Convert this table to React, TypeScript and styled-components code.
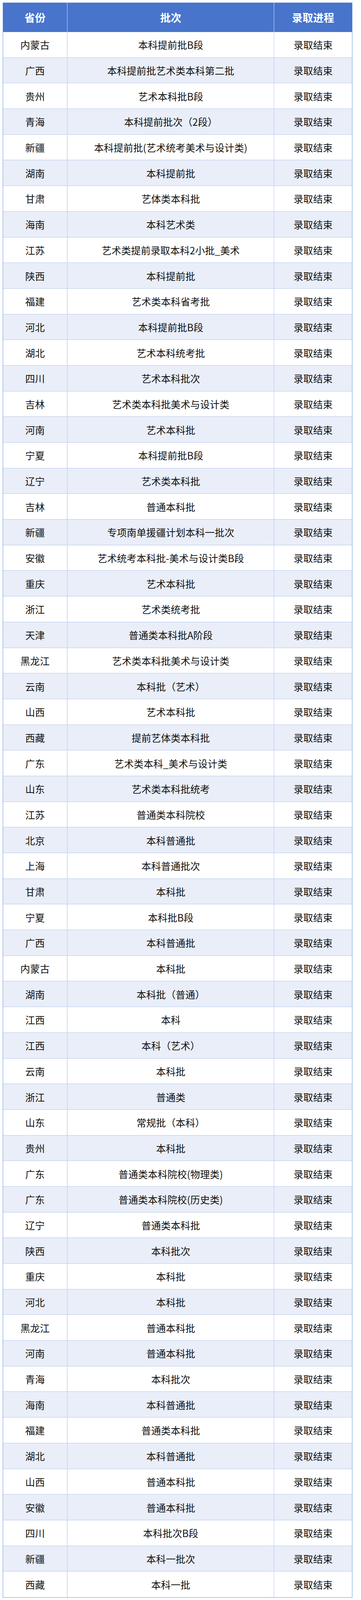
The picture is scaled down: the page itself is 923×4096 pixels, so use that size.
import React from "react";
import styled, { createGlobalStyle } from "styled-components";

const Global = createGlobalStyle`
  html, body { margin: 0; padding: 0; background: #ffffff; }
  body { font-family: "Microsoft YaHei", "Noto Sans CJK SC", "Noto Sans", sans-serif; }
`;

const Table = styled.div`
  margin: 6px 0 0 7px;
  width: 894px;
  box-sizing: border-box;
  border: 1.5px solid #6b93e0;
  border-top-color: #c9d7f2;
`;

const Row = styled.div<{ $alt?: boolean; $head?: boolean; $last?: boolean }>`
  display: grid;
  grid-template-columns: 165px 528px 1fr;
  height: ${(p) => (p.$head ? "75px" : "65.7px")};
  background: ${(p) => (p.$head ? "#4874cb" : p.$alt ? "#e9eef9" : "#ffffff")};
  border-bottom: ${(p) => (p.$last ? "none" : p.$head ? "none" : "1px solid #b4c8ec")};
  box-sizing: border-box;
`;

const Cell = styled.div<{ $head?: boolean; $first?: boolean }>`
  display: flex;
  align-items: center;
  justify-content: center;
  font-size: ${(p) => (p.$head ? "27px" : "25px")};
  font-weight: ${(p) => (p.$head ? 700 : 400)};
  color: ${(p) => (p.$head ? "#ffffff" : "#111111")};
  border-right: ${(p) =>
    p.$first ? "2px solid #cfdbf3" : "1px solid #b4c8ec"};
  white-space: nowrap;
  box-sizing: border-box;
  &:last-child { border-right: none; }
`;

const HeadCell = styled(Cell)`
  border-right-color: ${(p) => (p.$first ? "#8aa9e4" : "#d6e1f5")};
`;

const data: [string, string][] = [
  ["内蒙古", "本科提前批B段"],
  ["广西", "本科提前批艺术类本科第二批"],
  ["贵州", "艺术本科批B段"],
  ["青海", "本科提前批次（2段）"],
  ["新疆", "本科提前批(艺术统考美术与设计类)"],
  ["湖南", "本科提前批"],
  ["甘肃", "艺体类本科批"],
  ["海南", "本科艺术类"],
  ["江苏", "艺术类提前录取本科2小批_美术"],
  ["陕西", "本科提前批"],
  ["福建", "艺术类本科省考批"],
  ["河北", "本科提前批B段"],
  ["湖北", "艺术本科统考批"],
  ["四川", "艺术本科批次"],
  ["吉林", "艺术类本科批美术与设计类"],
  ["河南", "艺术本科批"],
  ["宁夏", "本科提前批B段"],
  ["辽宁", "艺术类本科批"],
  ["吉林", "普通本科批"],
  ["新疆", "专项南单援疆计划本科一批次"],
  ["安徽", "艺术统考本科批-美术与设计类B段"],
  ["重庆", "艺术本科批"],
  ["浙江", "艺术类统考批"],
  ["天津", "普通类本科批A阶段"],
  ["黑龙江", "艺术类本科批美术与设计类"],
  ["云南", "本科批（艺术）"],
  ["山西", "艺术本科批"],
  ["西藏", "提前艺体类本科批"],
  ["广东", "艺术类本科_美术与设计类"],
  ["山东", "艺术类本科批统考"],
  ["江苏", "普通类本科院校"],
  ["北京", "本科普通批"],
  ["上海", "本科普通批次"],
  ["甘肃", "本科批"],
  ["宁夏", "本科批B段"],
  ["广西", "本科普通批"],
  ["内蒙古", "本科批"],
  ["湖南", "本科批（普通）"],
  ["江西", "本科"],
  ["江西", "本科（艺术）"],
  ["云南", "本科批"],
  ["浙江", "普通类"],
  ["山东", "常规批（本科）"],
  ["贵州", "本科批"],
  ["广东", "普通类本科院校(物理类)"],
  ["广东", "普通类本科院校(历史类)"],
  ["辽宁", "普通类本科批"],
  ["陕西", "本科批次"],
  ["重庆", "本科批"],
  ["河北", "本科批"],
  ["黑龙江", "普通本科批"],
  ["河南", "普通本科批"],
  ["青海", "本科批次"],
  ["海南", "本科普通批"],
  ["福建", "普通类本科批"],
  ["湖北", "本科普通批"],
  ["山西", "普通本科批"],
  ["安徽", "普通本科批"],
  ["四川", "本科批次B段"],
  ["新疆", "本科一批次"],
  ["西藏", "本科一批"],
];

export default function App() {
  return (
    <>
      <Global />
      <Table>
        <Row $head>
          <HeadCell $head $first>省份</HeadCell>
          <HeadCell $head>批次</HeadCell>
          <HeadCell $head>录取进程</HeadCell>
        </Row>
        {data.map(([p, b], i) => (
          <Row key={i} $alt={i % 2 === 1} $last={i === data.length - 1}>
            <Cell $first>{p}</Cell>
            <Cell>{b}</Cell>
            <Cell>录取结束</Cell>
          </Row>
        ))}
      </Table>
    </>
  );
}
